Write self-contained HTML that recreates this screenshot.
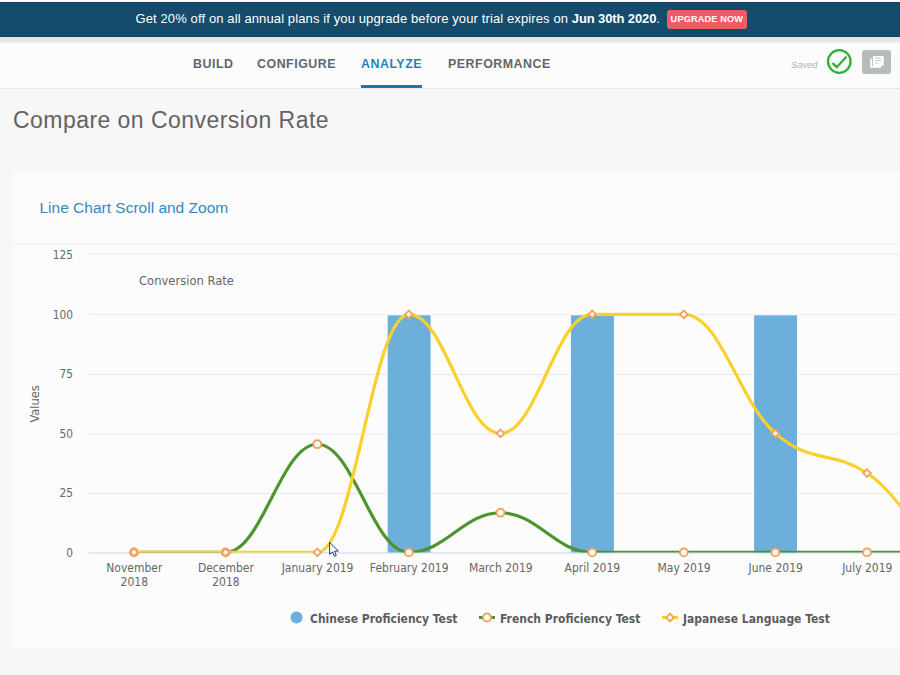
<!DOCTYPE html>
<html lang="en">
<head>
<meta charset="utf-8">
<title>Compare on Conversion Rate</title>
<style>
*{box-sizing:border-box;margin:0;padding:0}
html,body{width:900px;height:675px;overflow:hidden}
body{background:#f7f7f8;font-family:"Liberation Sans",sans-serif;position:relative;color:#555}
.topstrip{position:absolute;left:0;top:0;width:900px;height:3px;background:#fdfdfd}
.shade{position:absolute;left:0;top:36px;width:900px;height:9px;background:linear-gradient(#e2e4e4 0,#e3e5e5 5px,#f3f4f5 7px,#fcfcfc 9px)}
.banner{position:absolute;left:0;top:2px;width:900px;height:34.7px;background:#154b6b;color:#fff;font-size:13px;box-shadow:inset 0 1px 0 #0f4363,inset 0 -1px 0 #0f4363}
.banner .msg{position:absolute;left:135.5px;top:0;line-height:33px;white-space:nowrap;letter-spacing:0.115px}
.banner .msg b{font-weight:700;letter-spacing:-0.12px}
.banner .btn{position:absolute;left:667px;top:8.3px;width:79.8px;height:18.6px;background:#f15b66;border-radius:3px;color:#fff;font-size:9.2px;font-weight:700;text-align:center;line-height:19.6px;letter-spacing:0.15px;white-space:nowrap}
.nav{position:absolute;left:0;top:37px;width:900px;height:52px;background:#fcfcfc;border-bottom:1px solid #e6e8ea}
.nav a{position:absolute;top:0.7px;line-height:52px;font-size:12.4px;font-weight:700;color:#60666e;white-space:nowrap;text-decoration:none;letter-spacing:0.52px}
.nav a.act{color:#1f82c2}
.nav a.act:after{content:"";position:absolute;left:0;right:0.5px;top:47.4px;height:2.9px;background:#1379b9}
.saved{position:absolute;left:791px;top:51.9px;font-size:9.5px;font-style:italic;color:#b0b3b6;line-height:26px;letter-spacing:-0.1px}
.check{position:absolute;left:826.3px;top:49.3px}
.copy{position:absolute;left:862px;top:50px;width:29px;height:24px;background:#b4bcbc;border-radius:3px}
h1{position:absolute;left:13px;top:105.8px;font-size:23px;font-weight:400;color:#636363;line-height:28px;white-space:nowrap;letter-spacing:0.45px}
.card{position:absolute;left:12.5px;top:170.5px;width:900px;height:478px;background:#fcfcfc}
.card h2{position:absolute;left:27px;top:27px;font-size:15.5px;font-weight:400;color:#3588bb;line-height:20px;white-space:nowrap}
.card .div{position:absolute;left:0;top:73px;width:900px;height:1px;background:#efefef}
.chart{position:absolute;left:0;top:244px}
.chart text{font-family:"DejaVu Sans Condensed","DejaVu Sans",sans-serif}
.ax{font-size:11.8px;fill:#666}
.xl{font-size:12px}
.vl{font-size:12.7px;fill:#666}
.ttl{font-size:12.85px;fill:#666}
.lg{font-size:12px;font-weight:700;fill:#5c5c5c}
</style>
</head>
<body>
<div class="topstrip"></div>
<div class="nav">
<a id="n1" style="left:193px">BUILD</a>
<a id="n2" style="left:257px">CONFIGURE</a>
<a id="n3" class="act" style="left:361px">ANALYZE</a>
<a id="n4" style="left:448px">PERFORMANCE</a>
</div>
<div class="shade"></div>
<div class="banner">
<div class="msg"><span id="m1">Get 20% off on all annual plans if you upgrade before your trial expires on</span> <b id="m2">Jun 30th 2020</b>.</div>
<div class="btn">UPGRADE NOW</div>
</div>
<div class="saved">Saved</div>
<svg class="check" width="28" height="28" viewBox="0 0 28 28"><circle cx="13.3" cy="12.5" r="11.3" fill="#fdfdfd" stroke="#2fb032" stroke-width="2.3"/><path d="M 7.1 14.7 L 10.8 18.2 L 19.9 8.3" fill="none" stroke="#2fb032" stroke-width="2.3" stroke-linecap="round" stroke-linejoin="miter"/></svg>
<div class="copy"><svg width="29" height="24" viewBox="0 0 29 24"><path d="M 9.05 8.4 L 9.05 16.8 L 19 16.8" fill="none" stroke="#fff" stroke-width="1.7"/><rect x="10.8" y="6" width="10.9" height="9.9" rx="1.2" fill="#fff"/><path d="M 13.2 8.1 H 19 M 13.2 10.6 H 19 M 13.2 13.1 H 16.6" stroke="#c3c9c9" stroke-width="1"/></svg></div>
<h1 id="h1">Compare on Conversion Rate</h1>
<div class="card">
<h2 id="h2">Line Chart Scroll and Zoom</h2>
<div class="div"></div>
</div>
<svg class="chart" width="900" height="405" viewBox="0 244 900 405">
<defs><clipPath id="plot"><rect x="88" y="240" width="820" height="312.6"/></clipPath></defs>
<path d="M 88.5 493.4 L 900 493.4" stroke="#e6e6e6" stroke-width="1" fill="none"/>
<path d="M 88.5 433.9 L 900 433.9" stroke="#e6e8ee" stroke-width="1" fill="none"/>
<path d="M 88.5 374.4 L 900 374.4" stroke="#e6e6e6" stroke-width="1" fill="none"/>
<path d="M 88.5 314.6 L 900 314.6" stroke="#ececec" stroke-width="1" fill="none"/>
<path d="M 88.5 254.1 L 900 254.1" stroke="#ececec" stroke-width="1" fill="none"/>
<path d="M 88.5 552.9 L 900 552.9" stroke="#ccd6eb" stroke-width="1" fill="none"/>
<text x="73" y="556.7" text-anchor="end" class="ax">0</text>
<text x="73" y="497.2" text-anchor="end" class="ax">25</text>
<text x="73" y="437.7" text-anchor="end" class="ax">50</text>
<text x="73" y="378.2" text-anchor="end" class="ax">75</text>
<text x="73" y="318.7" text-anchor="end" class="ax">100</text>
<text x="73" y="259.2" text-anchor="end" class="ax">125</text>
<text x="0" y="0" transform="translate(39.3,404) rotate(-90)" text-anchor="middle" class="vl">Values</text>
<text x="139" y="284.6" class="ttl">Conversion Rate</text>
<rect x="387.1" y="314.8" width="44" height="239" fill="#6cafda" stroke="#fff" stroke-width="1" clip-path="url(#plot)"/>
<rect x="570.4" y="314.8" width="44" height="239" fill="#6cafda" stroke="#fff" stroke-width="1" clip-path="url(#plot)"/>
<rect x="753.6" y="314.8" width="44" height="239" fill="#6cafda" stroke="#fff" stroke-width="1" clip-path="url(#plot)"/>
<path d="M 134.00 552.40 C 134.00 552.40 188.98 552.40 225.63 552.40 C 262.28 552.40 280.61 444.23 317.26 444.23 C 353.91 444.23 372.24 552.40 408.89 552.40 C 445.54 552.40 463.87 512.73 500.52 512.73 C 537.17 512.73 555.50 552.40 592.15 552.40 C 628.80 552.40 647.13 552.40 683.78 552.40 C 720.43 552.40 738.76 552.40 775.41 552.40 C 812.06 552.40 830.39 552.40 867.04 552.40 C 903.69 552.40 922.02 552.40 958.67 552.40 C 995.32 552.40 1050.30 552.40 1050.30 552.40" fill="none" stroke="#4c952e" stroke-width="3.2" stroke-linejoin="round" stroke-linecap="round" clip-path="url(#plot)"/>
<circle cx="134.0" cy="552.4" r="3.9" fill="#fff" stroke="#f0a35e" stroke-width="2"/>
<circle cx="225.6" cy="552.4" r="3.9" fill="#fff" stroke="#f0a35e" stroke-width="2"/>
<circle cx="317.3" cy="444.2" r="3.9" fill="#fff" stroke="#f0a35e" stroke-width="2"/>
<circle cx="408.9" cy="552.4" r="3.9" fill="#fff" stroke="#f0a35e" stroke-width="2"/>
<circle cx="500.5" cy="512.7" r="3.9" fill="#fff" stroke="#f0a35e" stroke-width="2"/>
<circle cx="592.1" cy="552.4" r="3.9" fill="#fff" stroke="#f0a35e" stroke-width="2"/>
<circle cx="683.8" cy="552.4" r="3.9" fill="#fff" stroke="#f0a35e" stroke-width="2"/>
<circle cx="775.4" cy="552.4" r="3.9" fill="#fff" stroke="#f0a35e" stroke-width="2"/>
<circle cx="867.0" cy="552.4" r="3.9" fill="#fff" stroke="#f0a35e" stroke-width="2"/>
<path d="M 134.00 552.40 C 134.00 552.40 188.98 552.40 225.63 552.40 C 262.28 552.40 280.61 552.40 317.26 552.40 C 353.91 552.40 372.24 314.40 408.89 314.40 C 445.54 314.40 463.87 433.40 500.52 433.40 C 537.17 433.40 555.50 314.40 592.15 314.40 C 628.80 314.40 647.13 314.40 683.78 314.40 C 720.43 314.40 738.76 401.67 775.41 433.40 C 812.06 465.13 830.39 449.27 867.04 473.07 C 903.69 496.87 922.02 552.40 958.67 552.40 C 995.32 552.40 1050.30 552.40 1050.30 552.40" fill="none" stroke="#fbcf2c" stroke-width="3.2" stroke-linejoin="round" stroke-linecap="round" clip-path="url(#plot)"/>
<path d="M 134.0 548.6 L 137.8 552.4 L 134.0 556.2 L 130.2 552.4 Z" fill="#fff" stroke="#f0a35e" stroke-width="1.9"/>
<path d="M 225.6 548.6 L 229.4 552.4 L 225.6 556.2 L 221.8 552.4 Z" fill="#fff" stroke="#f0a35e" stroke-width="1.9"/>
<path d="M 317.3 548.6 L 321.1 552.4 L 317.3 556.2 L 313.5 552.4 Z" fill="#fff" stroke="#f0a35e" stroke-width="1.9"/>
<path d="M 408.9 310.6 L 412.7 314.4 L 408.9 318.2 L 405.1 314.4 Z" fill="#fff" stroke="#f0a35e" stroke-width="1.9"/>
<path d="M 500.5 429.6 L 504.3 433.4 L 500.5 437.2 L 496.7 433.4 Z" fill="#fff" stroke="#f0a35e" stroke-width="1.9"/>
<path d="M 592.1 310.6 L 595.9 314.4 L 592.1 318.2 L 588.4 314.4 Z" fill="#fff" stroke="#f0a35e" stroke-width="1.9"/>
<path d="M 683.8 310.6 L 687.6 314.4 L 683.8 318.2 L 680.0 314.4 Z" fill="#fff" stroke="#f0a35e" stroke-width="1.9"/>
<path d="M 775.4 429.6 L 779.2 433.4 L 775.4 437.2 L 771.6 433.4 Z" fill="#fff" stroke="#f0a35e" stroke-width="1.9"/>
<path d="M 867.0 469.3 L 870.8 473.1 L 867.0 476.9 L 863.2 473.1 Z" fill="#fff" stroke="#f0a35e" stroke-width="1.9"/>
<text x="134.3" y="572" text-anchor="middle" class="ax xl">November</text>
<text x="134.3" y="586" text-anchor="middle" class="ax xl">2018</text>
<text x="225.9" y="572" text-anchor="middle" class="ax xl">December</text>
<text x="225.9" y="586" text-anchor="middle" class="ax xl">2018</text>
<text x="317.6" y="572" text-anchor="middle" class="ax xl">January 2019</text>
<text x="409.2" y="572" text-anchor="middle" class="ax xl">February 2019</text>
<text x="500.8" y="572" text-anchor="middle" class="ax xl">March 2019</text>
<text x="592.4" y="572" text-anchor="middle" class="ax xl">April 2019</text>
<text x="684.1" y="572" text-anchor="middle" class="ax xl">May 2019</text>
<text x="775.7" y="572" text-anchor="middle" class="ax xl">June 2019</text>
<text x="867.3" y="572" text-anchor="middle" class="ax xl">July 2019</text>
<circle cx="296.5" cy="617.5" r="6" fill="#6cafda"/>
<text x="310" y="622.5" class="lg">Chinese Proficiency Test</text>
<path d="M 479 617.5 L 495 617.5" stroke="#4c952e" stroke-width="3"/>
<circle cx="487" cy="617.5" r="3.9" fill="#fff" stroke="#f0a35e" stroke-width="2"/>
<text x="500" y="622.5" class="lg">French Proficiency Test</text>
<path d="M 662 617.5 L 678 617.5" stroke="#fbcf2c" stroke-width="3"/>
<path d="M 670 613.7 L 673.8 617.5 L 670 621.3 L 666.2 617.5 Z" fill="#fff" stroke="#f0a35e" stroke-width="1.9"/>
<text x="683" y="622.5" class="lg">Japanese Language Test</text>
<path d="M 329.6 542.3 L 329.6 554.3 L 332.4 551.9 L 334.5 556.3 L 336.3 555.5 L 334.4 551.3 L 338.3 551 Z" fill="#fdfdfd" stroke="#1f3d5c" stroke-width="1" stroke-linejoin="round"/>
</svg>
</body>
</html>
